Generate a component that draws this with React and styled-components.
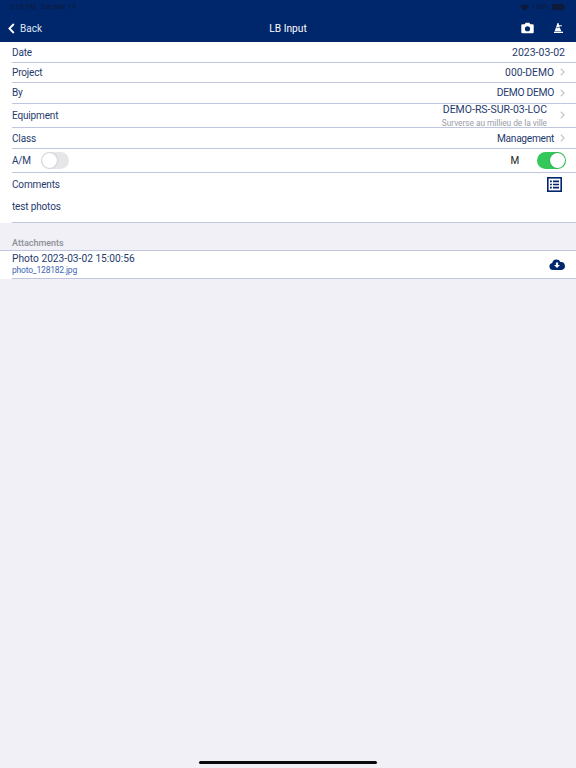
import React from "react";
import styled, { createGlobalStyle } from "styled-components";

const NAVY = "#00266b";
const TEXT = "#1f3a6e";

const GlobalStyle = createGlobalStyle`
  html, body {
    margin: 0;
    padding: 0;
    background: #f0f0f6;
    font-family: Roboto, "Liberation Sans", Arial, sans-serif;
  }
`;

const Page = styled.div`
  display: flex;
  flex-direction: column;
  width: 576px;
  height: 768px;
  overflow: hidden;
  background: #f0f0f6;
`;

const Header = styled.header`
  display: flex;
  flex-direction: column;
  height: 42px;
  background: ${NAVY};
`;

const StatusBar = styled.div`
  display: flex;
  justify-content: space-between;
  align-items: center;
  height: 14px;
  padding: 0 11px 0 10px;
  font-size: 7px;
  color: #0d1a3a;
`;

const StatusGroup = styled.div`
  display: flex;
  align-items: center;
  gap: ${(p) => p.$gap || 3}px;
`;

const NavBar = styled.div`
  display: grid;
  grid-template-columns: 1fr auto 1fr;
  align-items: center;
  height: 28px;
`;

const BackButton = styled.div`
  display: flex;
  align-items: center;
  gap: 5px;
  padding-left: 8px;
  font-size: 10px;
  color: #dfe5f0;
`;

const NavTitle = styled.div`
  font-size: 10.2px;
  color: #ffffff;
`;

const NavActions = styled.div`
  display: flex;
  justify-content: flex-end;
  align-items: center;
  gap: 20px;
  padding-right: 13px;
`;

const Section = styled.section`
  background: #ffffff;
`;

const Row = styled.div`
  display: flex;
  justify-content: space-between;
  align-items: center;
  box-sizing: border-box;
  height: ${(p) => p.$height}px;
  margin-left: 12px;
  padding-right: ${(p) => p.$pr ?? 11}px;
  padding-bottom: ${(p) => p.$pb ?? 1}px;
  border-bottom: 1px solid #bfc6de;
  font-size: 10px;
  color: ${TEXT};
`;

const Value = styled.div`
  display: flex;
  align-items: center;
  gap: ${(p) => p.$gap || 6}px;
  font-size: ${(p) => p.$size || 10}px;
  letter-spacing: ${(p) => p.$spacing || 0}px;
`;

const Chevron = styled.svg`
  width: 5px;
  height: 8px;
  fill: none;
  stroke: #c4c6cc;
  stroke-width: 1.2;
`;

const Stack = styled.div`
  display: flex;
  flex-direction: column;
  align-items: flex-end;
  gap: 2px;
`;

const Subtitle = styled.span`
  font-size: 8.4px;
  letter-spacing: -0.06px;
  color: #9a9ea6;
`;

const SwitchGroup = styled.div`
  display: flex;
  align-items: center;
  gap: ${(p) => p.$gap}px;
`;

const SwitchTrack = styled.div`
  display: flex;
  justify-content: ${(p) => (p.$on ? "flex-end" : "flex-start")};
  align-items: center;
  box-sizing: border-box;
  width: ${(p) => (p.$on ? 29 : 28)}px;
  height: 17px;
  padding: 1px;
  border-radius: 9px;
  background: ${(p) => (p.$on ? "#34c759" : "#e6e6e8")};
`;

const SwitchKnob = styled.div`
  width: 15px;
  height: 15px;
  border-radius: 50%;
  background: #ffffff;
  box-shadow: 0 0 2px rgba(0, 0, 0, 0.25);
`;

const Label = styled.span`
  letter-spacing: -0.15px;
  color: ${(p) => p.$color || TEXT};
`;

const CommentsBlock = styled.div`
  display: flex;
  flex-direction: column;
  box-sizing: border-box;
  height: 50px;
  margin-left: 12px;
  padding-right: 14px;
  border-bottom: 1px solid #bfc6de;
  font-size: 10px;
  color: ${TEXT};
`;

const CommentsHead = styled.div`
  display: flex;
  justify-content: space-between;
  align-items: center;
  height: 23px;
`;

const CommentsText = styled.div`
  margin-top: 5px;
  letter-spacing: -0.15px;
`;

const SectionTitle = styled.div`
  display: flex;
  align-items: flex-end;
  box-sizing: border-box;
  height: 28px;
  padding: 0 0 2px 12px;
  font-size: 9px;
  font-weight: 500;
  color: #8d8f96;
  border-bottom: 1px solid #bfc6de;
`;

const Attachment = styled.div`
  display: flex;
  flex-direction: column;
  gap: 1px;
  font-size: 10.2px;
`;

const FileName = styled.span`
  font-size: 8.5px;
  letter-spacing: -0.2px;
  color: #3f69b5;
`;

const HomeIndicator = styled.div`
  align-self: center;
  width: 178px;
  height: 3px;
  margin-top: auto;
  margin-bottom: 4px;
  border-radius: 2px;
  background: #0a0a0a;
`;

const RowChevron = () => (
  <Chevron viewBox="0 0 5 8">
    <path d="M0.8 0.8 L4.2 4 L0.8 7.2" />
  </Chevron>
);

const App = () => {
  return (
    <Page>
      <GlobalStyle />
      <Header>
        <StatusBar>
          <StatusGroup $gap={5}>
            <span>2:16 PM</span>
            <span>Tue Mar 14</span>
          </StatusGroup>
          <StatusGroup>
            <svg width="9" height="7" viewBox="0 0 9 7">
              <path d="M4.5 7 L0 2.2 A6.5 6.5 0 0 1 9 2.2 Z" fill="#0d1a3a" />
            </svg>
            <span>100%</span>
            <svg width="13" height="6" viewBox="0 0 13 6">
              <rect width="12" height="6" rx="1.5" fill="#0d1a3a" />
              <rect x="12.2" y="2" width="0.8" height="2" fill="#0d1a3a" />
            </svg>
          </StatusGroup>
        </StatusBar>
        <NavBar>
          <BackButton>
            <svg width="7" height="11" viewBox="0 0 7 11">
              <path d="M5.8 1 L1.4 5.5 L5.8 10" fill="none" stroke="#fff" strokeWidth="1.8" />
            </svg>
            <span>Back</span>
          </BackButton>
          <NavTitle>LB Input</NavTitle>
          <NavActions>
            <svg width="13" height="12" viewBox="0 0 14 12">
              <path
                fillRule="evenodd"
                d="M1.5 2 H4 L5 0.3 H9 L10 2 H12.5 A1.2 1.2 0 0 1 13.7 3.2 V10.5 A1.2 1.2 0 0 1 12.5 11.7 H1.5 A1.2 1.2 0 0 1 0.3 10.5 V3.2 A1.2 1.2 0 0 1 1.5 2 Z M7 4 A2.8 2.8 0 1 0 7 9.6 A2.8 2.8 0 1 0 7 4 Z"
                fill="#fff"
              />
            </svg>
            <svg width="9" height="10" viewBox="0 0 9 10">
              <path d="M3.5 0 H4.5 L5 2.2 H7.8 V3.2 H5.3 L7.3 8.2 H0.7 Z" fill="#fff" />
              <path d="M2.4 4.6 H5.6" stroke={NAVY} strokeWidth="0.7" />
              <rect x="0" y="8.7" width="9" height="1.3" fill="#fff" />
            </svg>
          </NavActions>
        </NavBar>
      </Header>

      <Section>
        <Row $height={21} $pb={0}>
          <Label>Date</Label>
          <Value $size={10.5}>2023-03-02</Value>
        </Row>
        <Row $height={20}>
          <Label>Project</Label>
          <Value $size={10.3}>
            000-DEMO
            <RowChevron />
          </Value>
        </Row>
        <Row $height={21}>
          <Label>By</Label>
          <Value $size={10.3} $spacing={-0.3}>
            DEMO DEMO
            <RowChevron />
          </Value>
        </Row>
        <Row $height={24}>
          <Label>Equipment</Label>
          <Value $gap={13} $size={10.5}>
            <Stack>
              <span>DEMO-RS-SUR-03-LOC</span>
              <Subtitle>Surverse au millieu de la ville</Subtitle>
            </Stack>
            <RowChevron />
          </Value>
        </Row>
        <Row $height={21} $pb={0}>
          <Label>Class</Label>
          <Value $size={10.2} $spacing={-0.3}>
            Management
            <RowChevron />
          </Value>
        </Row>
        <Row $height={24} $pr={10}>
          <SwitchGroup $gap={10}>
            <Label>A/M</Label>
            <SwitchTrack>
              <SwitchKnob />
            </SwitchTrack>
          </SwitchGroup>
          <SwitchGroup $gap={18}>
            <Label $color="#222">M</Label>
            <SwitchTrack $on>
              <SwitchKnob />
            </SwitchTrack>
          </SwitchGroup>
        </Row>
        <CommentsBlock>
          <CommentsHead>
            <Label>Comments</Label>
            <svg width="15" height="15" viewBox="0 0 15 15">
              <rect x="0.8" y="0.8" width="13.4" height="13.4" fill="none" stroke={NAVY} strokeWidth="1.6" />
              <path d="M6 4.4 H12 M6 7.5 H12 M6 10.6 H12" stroke={NAVY} strokeWidth="1.6" />
              <path d="M3 4.4 H4.8 M3 7.5 H4.8 M3 10.6 H4.8" stroke={NAVY} strokeWidth="1.6" />
            </svg>
          </CommentsHead>
          <CommentsText>test photos</CommentsText>
        </CommentsBlock>
      </Section>

      <SectionTitle>Attachments</SectionTitle>

      <Section>
        <Row $height={28} $pr={11}>
          <Attachment>
            <span>Photo 2023-03-02 15:00:56</span>
            <FileName>photo_128182.jpg</FileName>
          </Attachment>
          <svg width="16" height="11" viewBox="0 0 16 11">
            <path
              fillRule="evenodd"
              d="M4 11 A3.6 3.6 0 0 1 3.2 3.9 A4.4 4.4 0 0 1 11.4 3 A4 4 0 0 1 12.4 11 Z M6.9 3.5 V6 H5 L8 9 L11 6 H9.1 V3.5 Z"
              fill={NAVY}
            />
          </svg>
        </Row>
      </Section>

      <HomeIndicator />
    </Page>
  );
};

export default App;
